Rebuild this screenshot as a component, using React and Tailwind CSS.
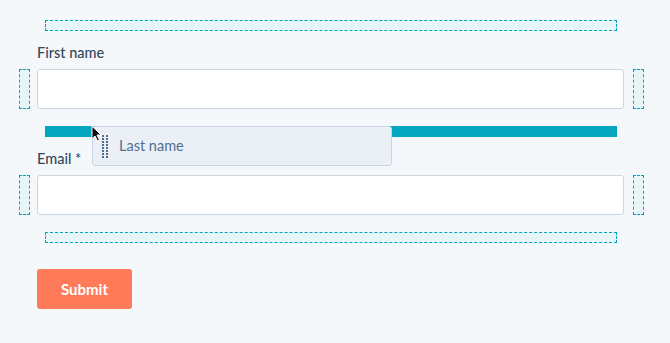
import React from "react";

function DropRow() {
  return (
    <div className="ml-[45px] h-[11px] w-[572px] border border-dashed border-[#00a4bd] bg-[#e5f5f8]" />
  );
}

function SideZone() {
  return <div className="h-[40px] w-[11px] border border-dashed border-[#00a4bd] bg-[#e5f5f8]" />;
}

function FieldRow() {
  return (
    <div className="ml-[19px] flex items-start">
      <SideZone />
      <div className="ml-[7px] h-[40px] w-[587px] rounded-[3px] border border-[#cbd6e2] bg-white" />
      <div className="ml-[9px]">
        <SideZone />
      </div>
    </div>
  );
}

export default function App() {
  const dots = [];
  for (let r = 0; r < 8; r++) {
    dots.push(<div key={"a" + r} className="h-[2px] w-[2px] bg-[#516f90]" />);
    dots.push(<div key={"b" + r} className="h-[2px] w-[2px] bg-[#516f90]" />);
  }
  return (
    <div
      className="relative h-[343px] w-[670px] overflow-hidden bg-[#f5f8fa] pt-[20px] text-[#33475b]"
      style={{ fontFamily: "Lato, 'Open Sans', sans-serif" }}
    >
      <DropRow />
      <div className="ml-[37px] mt-[13px] h-[17px] text-[14.5px] font-medium leading-[17px]">First name</div>
      <div className="mt-[8px]">
        <FieldRow />
      </div>
      <div className="ml-[45px] mt-[17px] h-[11px] w-[572px] bg-[#03a5bf]" />
      <div className="ml-[37px] mt-[13px] h-[17px] text-[14.5px] font-medium leading-[17px]">Email *</div>
      <div className="mt-[8px]">
        <FieldRow />
      </div>
      <div className="mt-[17px]">
        <DropRow />
      </div>
      <button className="ml-[37px] mt-[26px] flex h-[40px] w-[95px] items-center justify-center rounded-[3px] bg-[#ff7a59] text-[15px] font-bold text-white">
        Submit
      </button>

      <div className="absolute left-[92px] top-[126px] flex h-[40px] w-[300px] items-center rounded-[3px] border border-[#cbd6e2] bg-[#eaf0f6]">
        <div className="ml-[9px] grid grid-cols-2 gap-x-[2px] gap-y-[1px]">{dots}</div>
        <div className="ml-[11px] text-[14.5px] text-[#516f90]">Last name</div>
      </div>

      <svg className="absolute left-[91px] top-[125px]" width="12" height="18" viewBox="0 0 12 18">
        <path d="M1 1 L1 14 L4 11 L6.5 16 L8.5 15 L6 10 L10 10 Z" fill="#111" stroke="#fff" strokeWidth="1" strokeLinejoin="round" />
      </svg>
    </div>
  );
}
